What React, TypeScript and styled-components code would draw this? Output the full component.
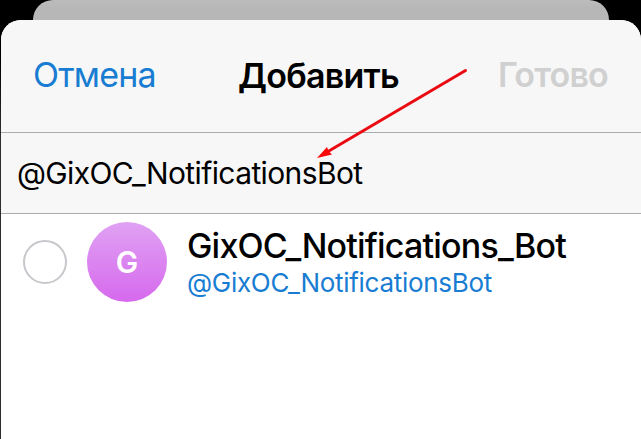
import React from 'react';
import styled, { createGlobalStyle } from 'styled-components';

const GlobalStyle = createGlobalStyle`
  * { box-sizing: border-box; }
  body { margin: 0; background: #000; overflow: hidden; font-family: Inter, "Liberation Sans", sans-serif; }
`;
const Screen = styled.main`
  width: 641px; height: 439px; display: flex; flex-direction: column; position: relative;
  background: linear-gradient(#000 60px, #2c2c2e 130px);
`;
const BackSheet = styled.div`
  height: 40px; margin: 0 32px -20px 33px; flex: none; border-radius: 20px 20px 0 0;
  background: linear-gradient(#bcbcbc, #b7b7b7 8px);
`;
const Sheet = styled.section`
  flex: 1; display: flex; flex-direction: column; background: #fff; border-radius: 20px 20px 0 0; overflow: hidden;
  margin-left: 1px; position: relative;
`;
const Header = styled.header`
  height: 113px; flex: none; display: grid; grid-template-columns: 205px auto 1fr; align-items: center;
  padding: 0 33px 2px 32px; background: #f7f7f7; border-bottom: 1px solid #acacac;
`;
const Action = styled.button<{ $disabled?: boolean }>`
  border: 0; padding: 0; background: none; font-family: inherit; font-size: 34px; line-height: 40px;
  font-weight: ${p => (p.$disabled ? 600 : 400)};
  text-align: ${p => (p.$disabled ? 'right' : 'left')};
  letter-spacing: -0.8px;
  color: ${p => (p.$disabled ? '#d0d0d0' : '#187dd2')};
`;
const Title = styled.h1`
  margin: 2px 0 0; font-size: 34px; line-height: 40px; font-weight: 600; letter-spacing: -0.75px;
`;
const Search = styled.div`
  height: 81px; flex: none; display: flex; align-items: center; padding-left: 16px; background: #f7f7f7;
  border-bottom: 1px solid #acacac; font-size: 30px; letter-spacing: -0.62px;
`;
const Contact = styled.div`
  display: flex; align-items: center; height: 96px; padding-left: 22px;
`;
const Check = styled.span`
  width: 44px; height: 44px; border: 2px solid #c7c7cc; border-radius: 50%; margin-right: 20px;
`;
const Avatar = styled.span`
  width: 80px; height: 80px; border-radius: 50%; margin-right: 20px; display: grid; place-items: center;
  color: #fff; font-size: 30px; font-weight: 600; background: linear-gradient(#e0a2f3, #d669ed);
`;
const Details = styled.div`display: flex; flex-direction: column;`;
const Name = styled.span`font-size: 34px; line-height: 42px; font-weight: 500; letter-spacing: -0.8px;`;
const Handle = styled.span`font-size: 26px; line-height: 32px; color: #187dd2; letter-spacing: -0.3px;`;
const Arrow = styled.svg`position: absolute; left: 0; top: 0; pointer-events: none;`;

export default function App() {
  return (
    <Screen>
      <GlobalStyle />
      <BackSheet />
      <Sheet>
        <Header>
          <Action>Отмена</Action>
          <Title>Добавить</Title>
          <Action $disabled>Готово</Action>
        </Header>
        <Search>@GixOC_NotificationsBot</Search>
        <Contact>
          <Check />
          <Avatar>G</Avatar>
          <Details>
            <Name>GixOC_Notifications_Bot</Name>
            <Handle>@GixOC_NotificationsBot</Handle>
          </Details>
        </Contact>
      </Sheet>
      <Arrow width="641" height="439" viewBox="0 0 641 439">
        <path d="M465.5 70.5 L328 151.5" stroke="#ea0a12" strokeWidth="3" strokeLinecap="round" />
        <path d="M317 158 L327 147 L328.5 151 L332 154.5 Z" fill="#fb0808" />
      </Arrow>
    </Screen>
  );
}
